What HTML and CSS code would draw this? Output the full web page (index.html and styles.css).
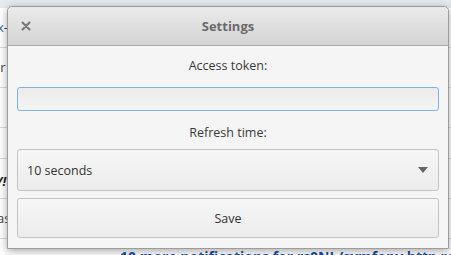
FILE: index.html
```html
<!DOCTYPE html>
<html lang="en">
<head>
  <meta charset="UTF-8">
  <title>Settings</title>
  <link rel="stylesheet" href="styles.css">
</head>
<body>
  <div class="page">
    <div class="topbar"></div>
    <div class="row"><span class="link">x</span>-</div>
    <div class="row">ır</div>
    <div class="row"></div>
    <div class="row short"></div>
    <div class="row bold">/!</div>
    <div class="row">as</div>
    <div class="more">10 more notifications for rs0NL/symfony http repo</div>
  </div>

  <div class="dialog">
    <div class="titlebar">
      <svg class="close" width="10" height="10" viewBox="0 0 10 10">
        <path d="M1.5 1.5 L8.5 8.5 M8.5 1.5 L1.5 8.5" stroke="#747474" stroke-width="2" stroke-linecap="round"/>
      </svg>
      <div class="title">Settings</div>
    </div>
    <div class="content">
      <div class="label">Access token:</div>
      <input type="text" class="token">
      <div class="label label-refresh">Refresh time:</div>
      <div class="select">
        <span>10 seconds</span>
        <svg width="10" height="6" viewBox="0 0 10 6"><path d="M0 0 L10 0 L5 6 Z" fill="#666"/></svg>
      </div>
      <button class="save">Save</button>
    </div>
  </div>
</body>
</html>
```

FILE: styles.css
```css
body {
  margin: 0;
  font-family: "Open Sans", sans-serif;
  background-color: #fff;
  overflow: hidden;
}
.page {
  width: 451px;
  height: 255px;
  position: relative;
  color: #333;
  font-size: 13px;
}
.topbar {
  height: 8px;
  background-color: #e6eaef;
}
.row {
  height: 39px;
  line-height: 39px;
  border-bottom: 1px solid #d8d8d8;
  text-indent: -3px;
  color: #444;
}
.row.short {
  height: 30px;
}
.row.bold {
  line-height: 44px;
  font-weight: bold;
  font-style: italic;
  color: #222;
}
.link {
  color: #3b6fb0;
}
.more {
  padding-left: 120px;
  margin-top: 8px;
  font-size: 14px;
  font-weight: bold;
  color: #1d4f9a;
  white-space: nowrap;
}

.dialog {
  position: absolute;
  left: 7px;
  top: 6px;
  width: 440px;
  border: 1px solid #9c9c9c;
  border-radius: 5px 5px 0 0;
  background-color: #f5f5f5;
  box-shadow: 0 2px 8px rgba(0,0,0,0.35);
}
.titlebar {
  position: relative;
  height: 38px;
  border-bottom: 1px solid #a9a9a9;
  border-radius: 5px 5px 0 0;
  background: linear-gradient(#ebebeb, #d3d3d3);
  display: flex;
  align-items: center;
  justify-content: center;
}
.close {
  position: absolute;
  left: 13px;
  top: 14px;
}
.title {
  font-size: 13px;
  font-weight: bold;
  color: #6a6a6a;
}
.content {
  padding: 11px 9px 10px;
  display: flex;
  flex-direction: column;
}
.label {
  text-align: center;
  font-size: 12.5px;
  line-height: 18px;
  color: #3a3a3a;
}
.token {
  margin: 12px 0 0;
  height: 24px;
  box-sizing: border-box;
  border: 1px solid #7fb1e3;
  border-radius: 3px;
  background: linear-gradient(#ebebeb, #f4f4f4);
  outline: none;
}
.label-refresh {
  margin-top: 13px;
}
.select {
  margin-top: 7px;
  height: 42px;
  box-sizing: border-box;
  border: 1px solid #c3c3c3;
  border-radius: 3px;
  background: linear-gradient(#f6f6f6, #ececec);
  display: flex;
  align-items: center;
  justify-content: space-between;
  padding: 0 10px 0 9px;
  font-size: 12.5px;
  color: #333;
}
.save {
  margin-top: 7px;
  height: 40px;
  border: 1px solid #c3c3c3;
  border-radius: 3px;
  background: linear-gradient(#f6f6f6, #ececec);
  font-family: "Open Sans", sans-serif;
  font-size: 12.5px;
  color: #333;
}
```
